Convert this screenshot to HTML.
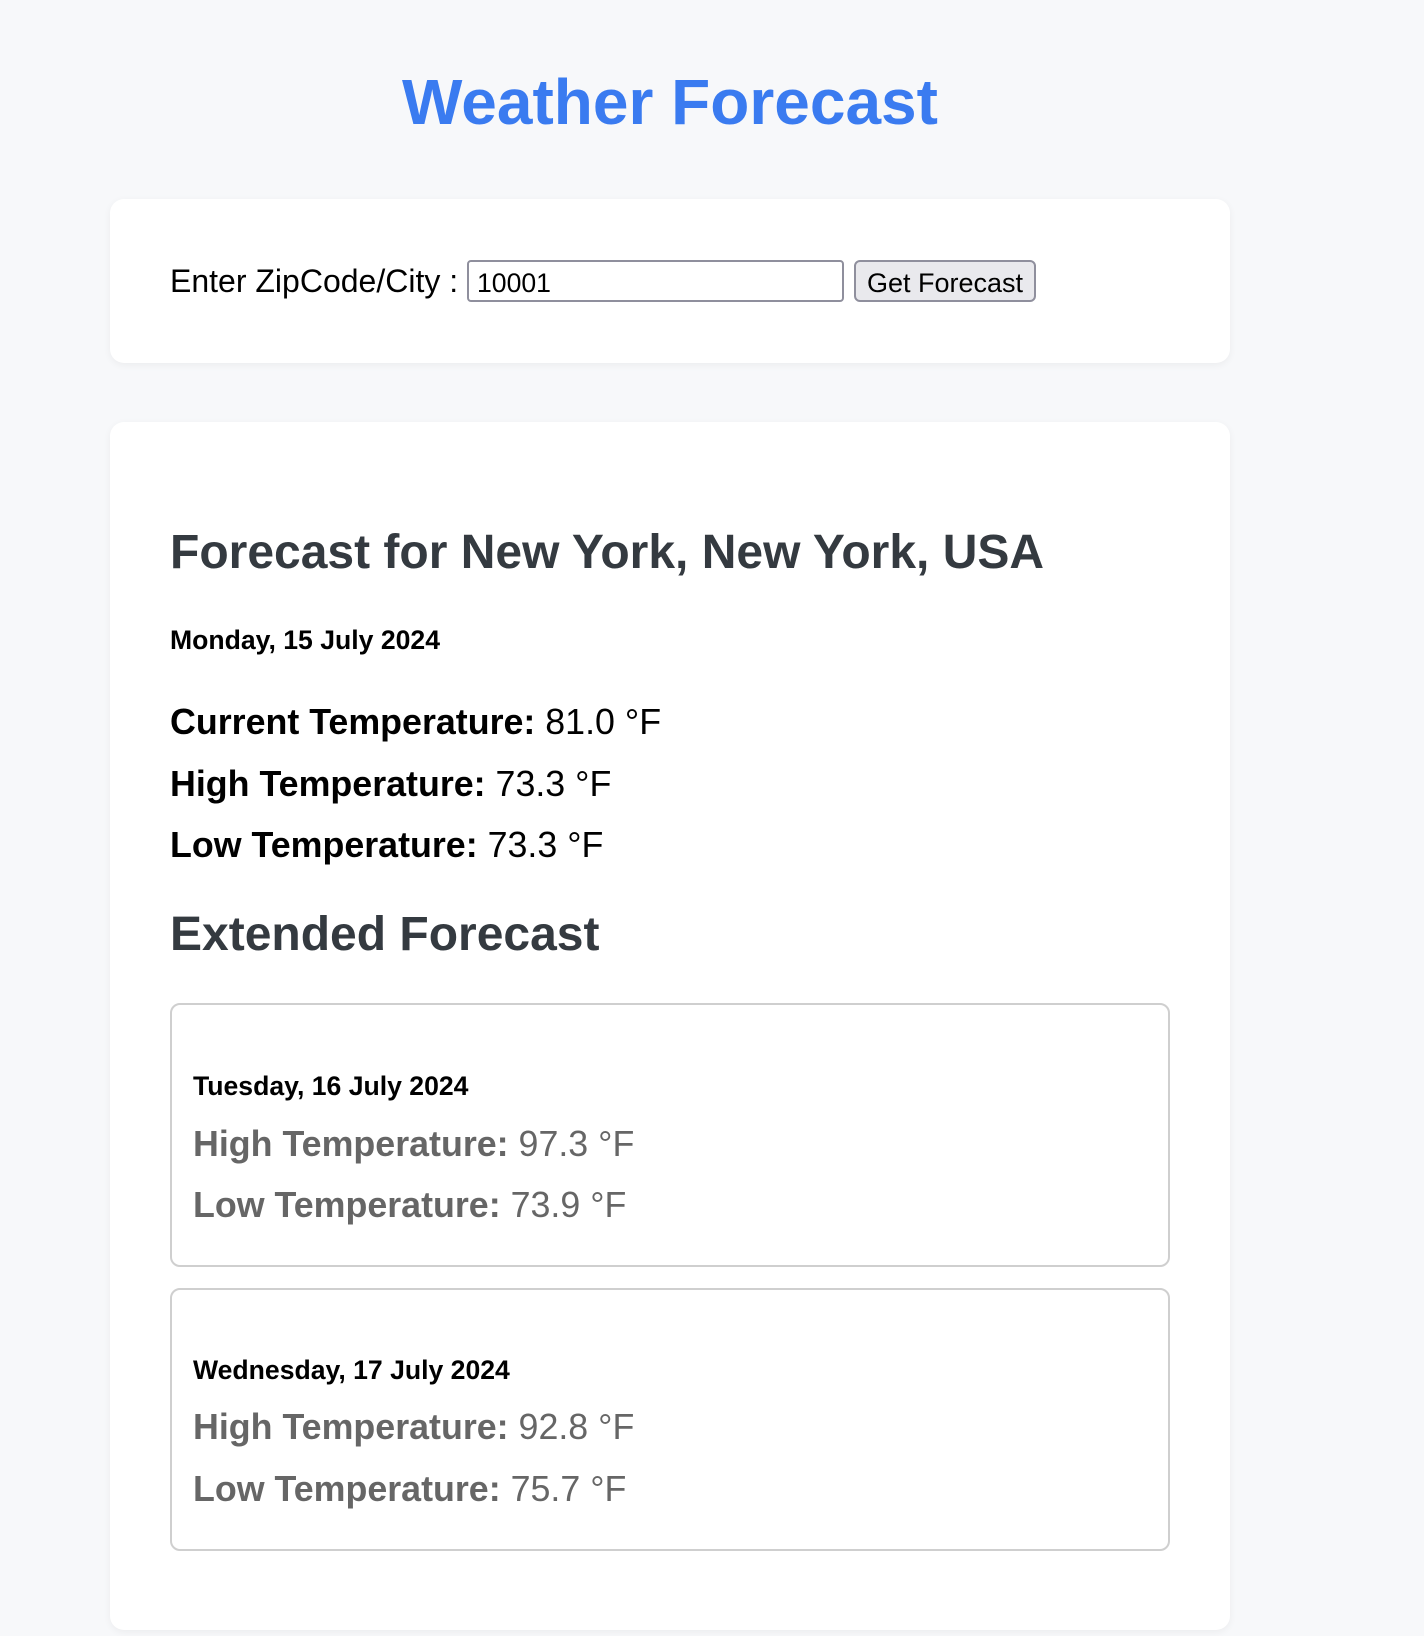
<!DOCTYPE html>
<html><head><meta charset="utf-8"><style>
*{margin:0;padding:0;box-sizing:border-box}
body{width:1424px;height:1636px;background:#f7f8fa;font-family:"Liberation Sans",Arial,sans-serif;position:relative;overflow:hidden;line-height:normal}
.a{position:absolute;white-space:nowrap}
.card{position:absolute;left:110px;width:1120px;background:#fff;border-radius:14px;box-shadow:0 2px 8px rgba(0,0,0,0.05)}
.box{position:absolute;left:170px;width:1000px;border:2px solid #cfcfcf;border-radius:10px;background:#fff}
.h{color:#343a40;font-weight:bold;font-size:48px}
.d{font-weight:bold;font-size:26.6px;color:#000}
.t{font-size:35.8px;color:#000}
.g{font-size:35.8px;color:#666}
b{font-weight:bold}
</style></head><body>
<div class="a" style="left:110px;width:1120px;text-align:center;top:65px;font-size:64px;font-weight:bold;color:#3a7bf0">Weather Forecast</div>
<div class="card" style="top:199px;height:164px"></div>
<div class="a" style="left:170px;top:263px;font-size:32px;color:#000">Enter ZipCode/City :</div>
<div class="a" style="left:467px;top:260px;width:377px;height:42px;border:2px solid #8f8f9d;border-radius:4px;background:#fff;font-size:26.6px;padding:6px 0 0 8px;color:#000">10001</div>
<div class="a" style="left:854px;top:260px;width:182px;height:42px;border:2px solid #8f8f9d;border-radius:6px;background:#e9e9ed;font-size:27px;text-align:center;padding-top:6px;color:#000">Get Forecast</div>
<div class="card" style="top:422px;height:1208px"></div>
<div class="a h" style="left:170px;top:525px">Forecast for New York, New York, USA</div>
<div class="a d" style="left:170px;top:625px">Monday, 15 July 2024</div>
<div class="a t" style="left:170px;top:702px"><b>Current Temperature:</b> 81.0 °F</div>
<div class="a t" style="left:170px;top:764px"><b>High Temperature:</b> 73.3 °F</div>
<div class="a t" style="left:170px;top:825px"><b>Low Temperature:</b> 73.3 °F</div>
<div class="a h" style="left:170px;top:907px">Extended Forecast</div>
<div class="box" style="top:1003px;height:264px"></div>
<div class="a d" style="left:193px;top:1071px">Tuesday, 16 July 2024</div>
<div class="a g" style="left:193px;top:1124px"><b>High Temperature:</b> 97.3 °F</div>
<div class="a g" style="left:193px;top:1185px"><b>Low Temperature:</b> 73.9 °F</div>
<div class="box" style="top:1288px;height:263px"></div>
<div class="a d" style="left:193px;top:1355px">Wednesday, 17 July 2024</div>
<div class="a g" style="left:193px;top:1407px"><b>High Temperature:</b> 92.8 °F</div>
<div class="a g" style="left:193px;top:1469px"><b>Low Temperature:</b> 75.7 °F</div>
</body></html>
